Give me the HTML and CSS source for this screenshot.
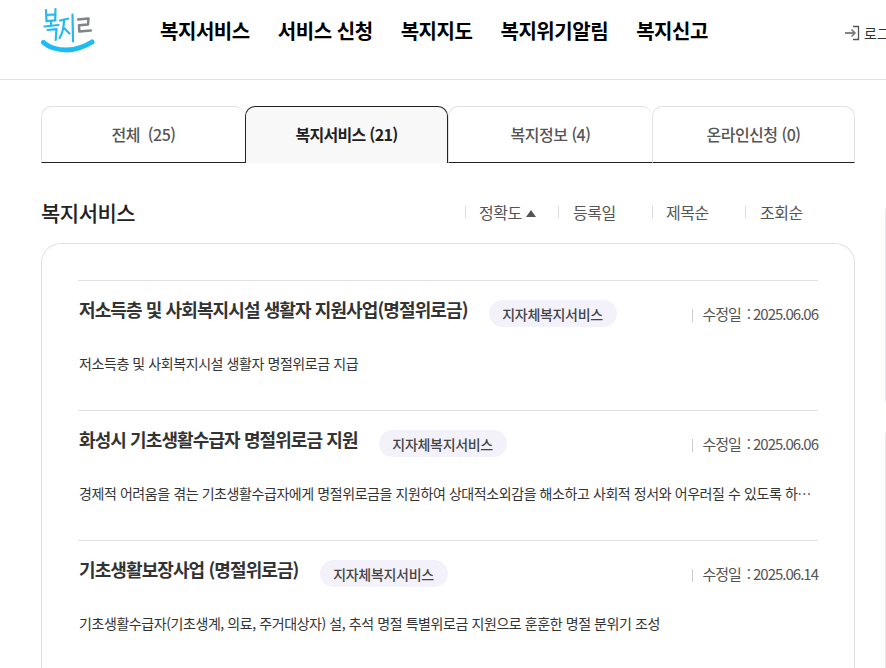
FILE: index.html
```html
<!DOCTYPE html>
<html lang="ko">
<head>
<meta charset="utf-8">
<title>복지서비스</title>
<link rel="stylesheet" href="styles.css">
</head>
<body>
<header class="header">
  <svg class="logo" width="60" height="56" viewBox="38 2 60 56" fill="none" stroke-linecap="round" stroke-linejoin="round">
    <g stroke="#25b9ee" stroke-width="2.200">
      <path d="M46 10l.5 11.500M55.500 9l-.3 11.500M46.500 15l9-.7M46.500 21l9-.7"/>
      <path d="M51 21v4M44.500 26.500l14-1.500M47.500 30l9-.8-.8 10.800"/>
      <path d="M60 20.500l8-1.800M64 19.500Q64 31 59.500 38M64.500 28.500l5 5M72.500 14.500l.5 27"/>
    </g>
    <path d="M78 19.500l10.500-1-.5 6-9 .8.300 6.200 11.500-1" stroke="#7f858b" stroke-width="2.500"/>
    <path d="M43.500 42.500Q52 50 67 50Q80 49.500 92 42" stroke="#19bdf2" stroke-width="5"/>
  </svg>
  <nav class="nav">
    <a>복지서비스</a>
    <a>서비스 신청</a>
    <a>복지지도</a>
    <a>복지위기알림</a>
    <a>복지신고</a>
  </nav>
  <div class="login">
    <svg width="16" height="16" viewBox="0 0 16 16" fill="none">
      <path d="M9 1.500h5.500v13H9" stroke="#555" stroke-width="1.300"/>
      <path d="M1 8h9" stroke="#777" stroke-width="1.800"/>
      <path d="M7.500 4.500L11 8l-3.500 3.500" stroke="#777" stroke-width="1.500"/>
    </svg>
    <span>로그인</span>
  </div>
</header>

<main class="main">
  <div class="tabs">
    <a class="tab">전체&nbsp; (25)</a>
    <a class="tab active">복지서비스 (21)</a>
    <a class="tab">복지정보 (4)</a>
    <a class="tab">온라인신청 (0)</a>
  </div>

  <div class="content">
    <div class="left">
      <div class="list-head">
        <h2>복지서비스</h2>
        <ul class="sort">
          <li class="s1">정확도 <i class="arrow"></i></li>
          <li class="s2">등록일</li>
          <li class="s3">제목순</li>
          <li class="s4">조회순</li>
        </ul>
      </div>

      <section class="card">
        <article class="item">
          <div class="item-top">
            <h3>저소득층 및 사회복지시설 생활자 지원사업(명절위로금)</h3>
            <span class="badge">지자체복지서비스</span>
            <span class="date">수정일<b>:</b>2025.06.06</span>
          </div>
          <p>저소득층 및 사회복지시설 생활자 명절위로금 지급</p>
        </article>
        <article class="item">
          <div class="item-top">
            <h3>화성시 기초생활수급자 명절위로금 지원</h3>
            <span class="badge">지자체복지서비스</span>
            <span class="date">수정일<b>:</b>2025.06.06</span>
          </div>
          <p>경제적 어려움을 겪는 기초생활수급자에게 명절위로금을 지원하여 상대적소외감을 해소하고 사회적 정서와 어우러질 수 있도록 하는 사업입니다</p>
        </article>
        <article class="item">
          <div class="item-top">
            <h3>기초생활보장사업 (명절위로금)</h3>
            <span class="badge">지자체복지서비스</span>
            <span class="date">수정일<b>:</b>2025.06.14</span>
          </div>
          <p>기초생활수급자(기초생계, 의료, 주거대상자) 설, 추석 명절 특별위로금 지원으로 훈훈한 명절 분위기 조성</p>
        </article>
      </section>
    </div>
    <aside class="side">
      <div class="side-box one"></div>
      <div class="side-box two"></div>
    </aside>
  </div>
</main>
</body>
</html>
```
FILE: styles.css
```css
* { box-sizing: border-box; }
html, body { margin: 0; height: 668px; overflow: hidden; }
body {
  background: #fff;
  color: #222;
  font-family: "Noto Sans CJK KR", "Noto Sans", sans-serif;
}
.header {
  height: 80px;
  border-bottom: 1px solid #e2e2e2;
  display: flex;
  padding-left: 38px;
  position: relative;
}
.logo { margin-top: 2px; flex: none; }
.nav {
  display: flex;
  gap: 28px;
  margin-left: 62px;
  padding-top: 16px;
  font-size: 20px;
  font-weight: 700;
  line-height: 30px;
  color: #000;
  letter-spacing: -0.45px;
  white-space: nowrap;
}
.login {
  position: absolute;
  left: 844px;
  top: 24px;
  display: flex;
  align-items: center;
  gap: 4px;
  font-size: 14px;
  line-height: 18px;
  white-space: nowrap;
  color: #333;
}
.main { padding: 26px 0 0 41px; }
.tabs {
  display: grid;
  grid-template-columns: 204px 203px 204px 203px;
  width: 814px;
  height: 57px;
}
.tab {
  display: flex;
  align-items: center;
  justify-content: center;
  padding-bottom: 2px;
  border: 1px solid #e2e2e2;
  border-bottom: 1px solid #222;
  border-right: 0;
  border-radius: 10px 10px 0 0;
  font-size: 16px;
  font-weight: 500;
  color: #555;
  letter-spacing: -0.5px;
}
.tab:last-child { border-right: 1px solid #e2e2e2; }
.tab.active {
  background: #f8f8f8;
  border: 1px solid #222;
  border-bottom: 0;
  color: #222;
  font-weight: 700;
  letter-spacing: -0.7px;
}
.content { display: flex; gap: 30px; }
.left { width: 814px; flex: none; }
.list-head {
  height: 80px;
  display: flex;
  align-items: center;
  justify-content: space-between;
  padding: 17px 36px 0 0;
}
.list-head h2 {
  margin: 0;
  font-size: 21px;
  font-weight: 500;
  color: #222;
  letter-spacing: -0.5px;
}
.sort {
  list-style: none;
  margin: 0;
  padding: 0;
  display: flex;
  font-size: 16px;
  color: #555;
  letter-spacing: -0.5px;
}
.sort li {
  position: relative;
  padding-left: 14px;
  line-height: 24px;
  white-space: nowrap;
}
.sort li::before {
  content: "";
  position: absolute;
  left: 0;
  top: 6px;
  width: 1px;
  height: 12px;
  background: #ddd;
}
.s1 { width: 93px; }
.sort .s2 { width: 94px; padding-left: 15px; }
.s3 { width: 93px; }
.sort .s4 { width: 74px; padding-left: 15px; }
.arrow {
  display: inline-block;
  width: 0;
  height: 0;
  margin: 0 0 2px 0;
  border-left: 5px solid transparent;
  border-right: 5px solid transparent;
  border-bottom: 7px solid #555;
}
.card {
  border: 1px solid #e2e2e2;
  border-radius: 20px 20px 0 0;
  border-bottom: 0;
  height: 500px;
  padding: 36px 36px 0;
}
.item {
  height: 130px;
  border-top: 1px solid #e2e2e2;
}
.item-top {
  display: flex;
  align-items: center;
  height: 65px;
  position: relative;
}
.item h3 {
  margin: 0 21px 0 1px;
  font-size: 18px;
  font-weight: 700;
  color: #333;
  letter-spacing: -0.9px;
  white-space: nowrap;
  position: relative;
  top: -5px;
}
.badge {
  background: #f3f1fa;
  border-radius: 14px;
  width: 128px;
  height: 27px;
  display: flex;
  align-items: center;
  justify-content: center;
  font-size: 14px;
  font-weight: 500;
  color: #444;
  letter-spacing: -0.3px;
}
.date {
  margin-left: auto;
  position: relative;
  padding-left: 10px;
  font-size: 15px;
  color: #555;
  letter-spacing: -1px;
  white-space: nowrap;
}
.date b { font-weight: 400; margin: 0 3px 0 6px; }
.date::before {
  content: "";
  position: absolute;
  left: 0;
  top: 6px;
  width: 1px;
  height: 13px;
  background: #ccc;
}
.item p {
  margin: 7px 0 0 1px;
  font-size: 14px;
  line-height: 20px;
  color: #333;
  letter-spacing: -0.42px;
  white-space: nowrap;
  overflow: hidden;
  text-overflow: ellipsis;
}
.side { display: flex; flex-direction: column; gap: 23px; }
.side-box {
  width: 200px;
  border: 1px solid #e8e6f0;
  border-radius: 6px;
}
.side-box.one { height: 201px; margin-top: 42px; }
.side-box.two { height: 300px; border-color: #ece6e8; }
```
